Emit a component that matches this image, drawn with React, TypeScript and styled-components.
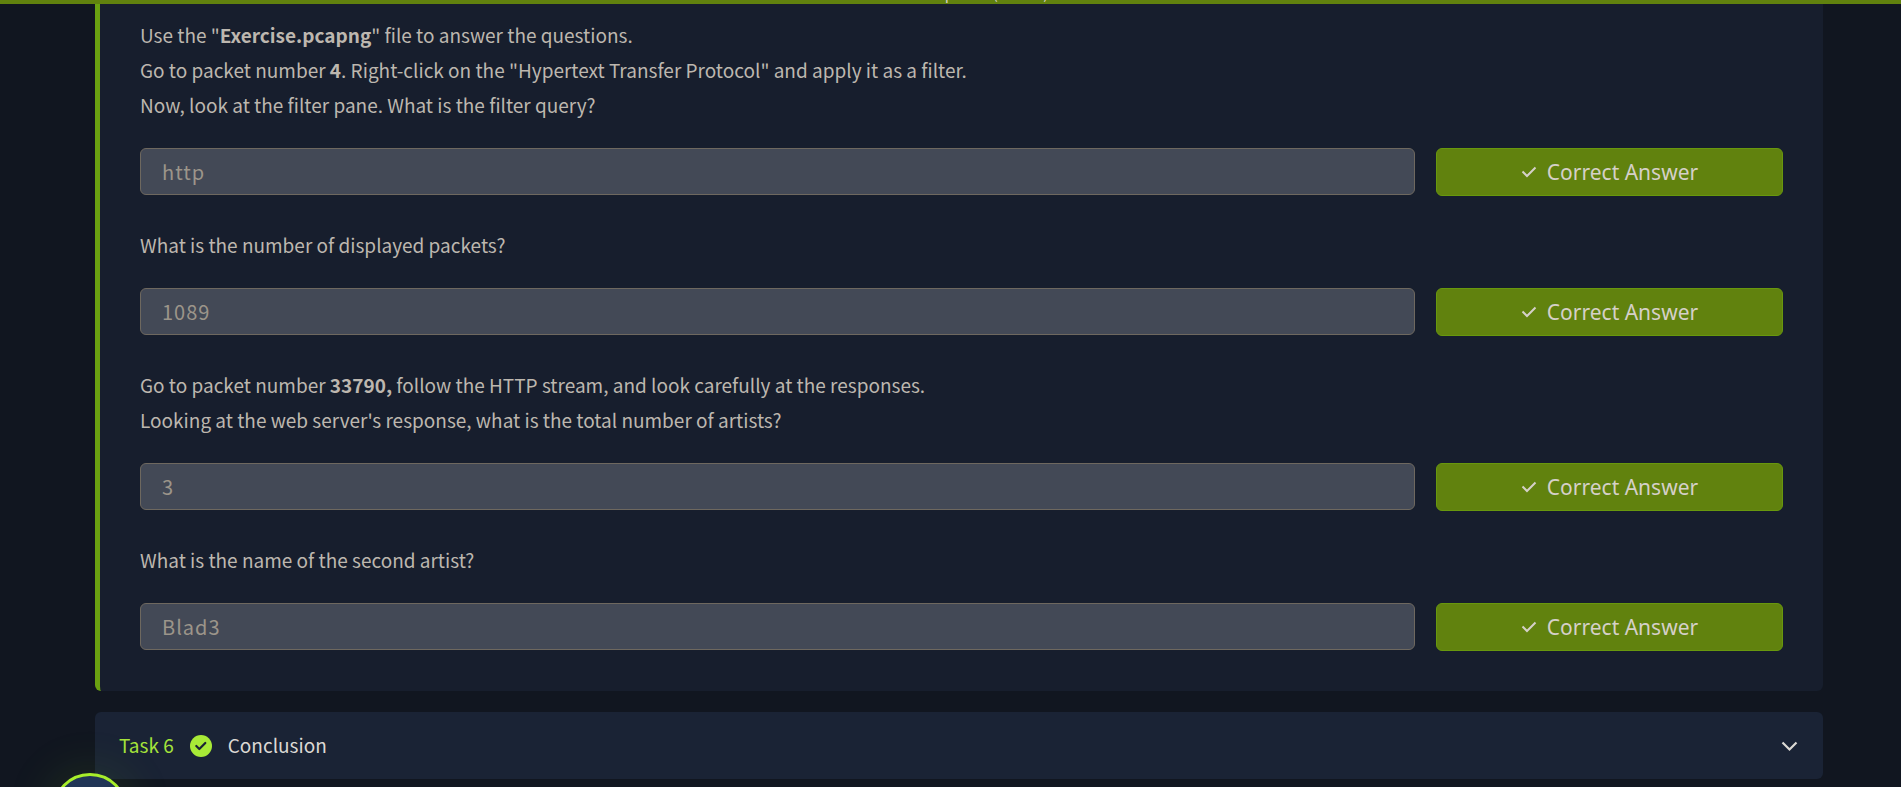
import React, { ReactNode, useId } from "react";
import styled, { createGlobalStyle } from "styled-components";

const GlobalStyle = createGlobalStyle`
  *, *::before, *::after { box-sizing: border-box; }
  html { height: 100%; overflow: hidden; background: #111620; }
  body {
    margin: 0;
    background: #111620;
    color: #bdb7af;
    font-family: "Noto Sans CJK SC", "Noto Sans", sans-serif;
    font-size: 19px;
    line-height: 35px;
  }
`;

const ProgressBanner = styled.div`
  display: flex;
  justify-content: center;
  align-items: flex-end;
  height: 4px;
  padding: 0 78px 0 95px;
  overflow: hidden;
  background: #61820e;
  color: #d5d0c8;
  font-size: 15px;
  line-height: 22px;
`;

const Page = styled.main`
  display: flex;
  flex-direction: column;
  gap: 21px;
  padding: 0 78px 8px 95px;
`;

const TaskPanel = styled.section`
  display: flex;
  flex-direction: column;
  gap: 31px;
  padding: 13px 40px 40px;
  background: #171e2d;
  border-left: 5px solid #6aa111;
  border-radius: 0 0 6px 6px;
`;

const Question = styled.form`
  display: flex;
  flex-direction: column;
  gap: 26px;
`;

const Prompt = styled.label`
  display: block;
`;

const AnswerRow = styled.div`
  display: grid;
  grid-template-columns: minmax(0, 1275fr) minmax(0, 347fr);
  align-items: start;
  gap: 21px;
`;

const AnswerInput = styled.input`
  width: 100%;
  height: 47px;
  padding: 0 21px;
  border: 1px solid #6e685f;
  border-radius: 6px;
  background: #434956;
  color: #9c958a;
  font-family: inherit;
  font-size: 20px;
  letter-spacing: 1px;
`;

const AnswerButton = styled.button`
  display: flex;
  align-items: center;
  justify-content: center;
  gap: 10px;
  height: 48px;
  padding: 0 16px;
  border: 1px solid #68980d;
  border-radius: 6px;
  background: #61820e;
  color: #d5d0c8;
  font-family: "Noto Sans", "Open Sans", sans-serif;
  font-size: 21px;
  line-height: 32px;
`;

const TaskHeader = styled.button`
  display: flex;
  align-items: center;
  height: 67px;
  padding: 0 24px;
  border: 0;
  border-radius: 6px;
  background: #1a2335;
  color: #dcd9d4;
  font: inherit;
  text-align: left;
`;

const HeaderText = styled.span`
  padding-bottom: 2px;
`;

const TaskNumber = styled(HeaderText)`
  margin-right: 16px;
  color: #a5e33b;
`;

const TaskTitle = styled(HeaderText)`
  flex: 1;
  margin-left: 16px;
`;

const Launcher = styled.button`
  position: fixed;
  left: 52px;
  bottom: -62px;
  width: 76px;
  height: 76px;
  border: 3px solid #a8ee2b;
  border-radius: 50%;
  background: #213556;
  box-shadow: 0 0 50px rgba(120, 190, 40, 0.16);
`;

const TickIcon = () => (
  <svg width="16" height="16" viewBox="0 0 16 16" fill="none" aria-hidden="true">
    <path d="M1.5 7.5 L6 12 L14.5 3.5" stroke="currentColor" strokeWidth="2" />
  </svg>
);

const DoneIcon = () => (
  <svg width="22" height="22" viewBox="0 0 22 22" fill="none" aria-hidden="true">
    <circle cx="11" cy="11" r="11" fill="#a8ea37" />
    <path
      d="M6.3 11 L9.3 14 L15.3 8"
      stroke="#1b2334"
      strokeWidth="2.2"
      strokeLinecap="round"
      strokeLinejoin="round"
    />
  </svg>
);

const ChevronIcon = () => (
  <svg width="18" height="18" viewBox="0 0 18 18" fill="none" aria-hidden="true">
    <path d="M1.5 5.5 L8.5 12.5 L15.5 5.5" stroke="currentColor" strokeWidth="2.2" />
  </svg>
);

const questions: { prompt: ReactNode; answer: string }[] = [
  {
    prompt: (
      <>
        Use the "<strong>Exercise.pcapng</strong>" file to answer the questions.
        <br />
        Go to packet number <strong>4</strong>. Right-click on the "Hypertext Transfer Protocol" and apply it as a filter.
        <br />
        Now, look at the filter pane. What is the filter query?
      </>
    ),
    answer: "http",
  },
  { prompt: "What is the number of displayed packets?", answer: "1089" },
  {
    prompt: (
      <>
        Go to packet number <strong>33790,</strong> follow the HTTP stream, and look carefully at the responses.
        <br />
        Looking at the web server's response, what is the total number of artists?
      </>
    ),
    answer: "3",
  },
  { prompt: "What is the name of the second artist?", answer: "Blad3" },
];

function QuestionBlock({ prompt, answer }: { prompt: ReactNode; answer: string }) {
  const id = useId();
  return (
    <Question>
      <Prompt htmlFor={id}>{prompt}</Prompt>
      <AnswerRow>
        <AnswerInput id={id} type="text" value={answer} readOnly />
        <AnswerButton type="button">
          <TickIcon />
          Correct Answer
        </AnswerButton>
      </AnswerRow>
    </Question>
  );
}

export default function App() {
  return (
    <>
      <GlobalStyle />
      <ProgressBanner>Room completed ( 100% )</ProgressBanner>
      <Page>
        <TaskPanel>
          {questions.map((question) => (
            <QuestionBlock key={question.answer} {...question} />
          ))}
        </TaskPanel>
        <TaskHeader type="button" aria-expanded={false}>
          <TaskNumber>Task 6</TaskNumber>
          <DoneIcon />
          <TaskTitle>Conclusion</TaskTitle>
          <ChevronIcon />
        </TaskHeader>
      </Page>
      <Launcher type="button" aria-label="Open menu" />
    </>
  );
}
